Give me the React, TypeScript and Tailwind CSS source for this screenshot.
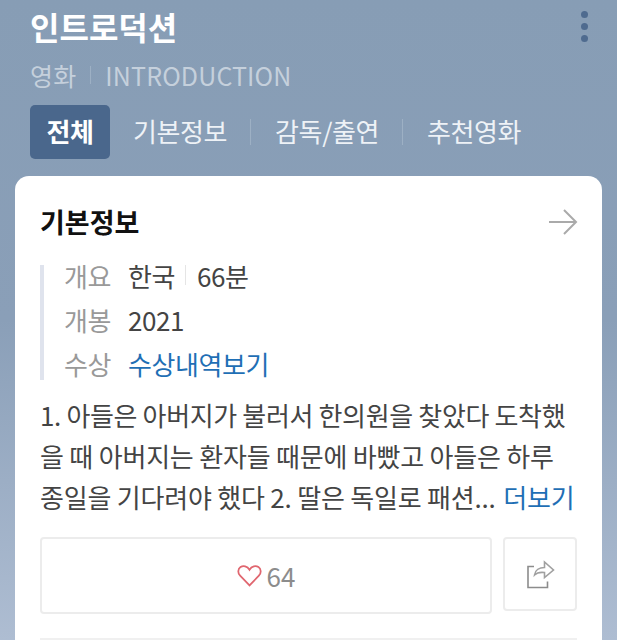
const font = "font-['Noto_Sans_CJK_KR','Noto_Sans',sans-serif]";

function InfoRow({ label, children }: { label: string; children: React.ReactNode }) {
  return (
    <div className="flex shrink-0 items-center h-[44px]">
      <span className="w-[64px] text-[#999999]">{label}</span>
      {children}
    </div>
  );
}

export default function App() {
  return (
    <div className={`${font} h-[640px] overflow-hidden bg-gradient-to-b from-[#879db5] via-[#8a9fb8] to-[#aebdd2]`}>
      <header className="relative pl-[30px] pt-[6px]">
        <h1 className="text-[32px] leading-[40px] font-bold text-white">인트로덕션</h1>
        <div className="flex items-center mt-[11px] text-[25px] leading-[36px] tracking-[0.15px] text-[#c5d0dc]">
          <span>영화</span>
          <span className="mx-[14px] w-px h-[18px] bg-[#9db0c4]" />
          <span>INTRODUCTION</span>
        </div>
        <div className="absolute right-[29px] top-[11px] flex flex-col gap-[5px]">
          <span className="size-[7px] rounded-full bg-[#4f6b8f]" />
          <span className="size-[7px] rounded-full bg-[#4f6b8f]" />
          <span className="size-[7px] rounded-full bg-[#4f6b8f]" />
        </div>
        <nav className="flex items-center mt-[12px] h-[54px] text-[26px] tracking-[-0.4px] text-[#eef2f6]">
          <span className="flex items-center justify-center w-[80px] h-[54px] pb-[3px] rounded-[5px] bg-[#4a678c] font-bold text-white">전체</span>
          <span className="ml-[23px] pb-[3px]">기본정보</span>
          <span className="ml-[23px] mr-[24px] w-px h-[26px] bg-[#9db0c4]" />
          <span className="pb-[3px]">감독/출연</span>
          <span className="ml-[23px] mr-[24px] w-px h-[26px] bg-[#9db0c4]" />
          <span className="pb-[3px]">추천영화</span>
        </nav>
      </header>
      <main className="mx-[15px] mt-[17px] px-[25px] pt-[23px] h-[500px] rounded-t-[14px] bg-white">
        <div className="flex items-center justify-between h-[46px]">
          <h2 className="text-[27px] font-bold text-[#111111]">기본정보</h2>
          <svg width="32" height="30" viewBox="0 0 32 30" fill="none" stroke="#aaaaaa" strokeWidth="2" className="mr-[-2px]">
            <path d="M2 15h27M17 3l12 12-12 12" />
          </svg>
        </div>
        <div className="mt-[20px] pl-[20px] pb-[7px] border-l-[4px] border-[#dfe3ed] text-[26px] tracking-[-0.4px] text-[#444444] h-[115px] flex flex-col justify-center">
          <InfoRow label="개요">
            <span>한국</span>
            <span className="ml-[10px] mr-[11px] w-px h-[20px] bg-[#e5e5e5]" />
            <span>66분</span>
          </InfoRow>
          <InfoRow label="개봉">
            <span>2021</span>
          </InfoRow>
          <InfoRow label="수상">
            <span className="text-[#1f6fb5]">수상내역보기</span>
          </InfoRow>
        </div>
        <p className="mt-[14px] text-[26px] leading-[41px] tracking-[-0.2px] text-[#444444] whitespace-nowrap">
          <span className="tracking-[-0.35px]">1. 아들은 아버지가 불러서 한의원을 찾았다 도착했</span>
          <br />
          을 때 아버지는 환자들 때문에 바빴고 아들은 하루
          <br />
          종일을 기다려야 했다 2. 딸은 독일로 패션... <span className="ml-[2px] text-[#1f6fb5]">더보기</span>
        </p>
        <div className="flex items-start gap-[11px] mt-[20px]">
          <button className="flex flex-1 items-center justify-center gap-[5px] h-[77px] rounded-[4px] border-2 border-[#ececec] text-[26px] text-[#8c8c8c]">
            <svg width="25" height="25" viewBox="0 0 24 24" fill="none" stroke="#e0666f" strokeWidth="1.7">
              <path d="M12 21.5 3 12.2C.4 9.4.9 5.6 3.4 3.9 6 2.2 9.800 2.800 12 6.500c2.200-3.700 6-4.300 8.600-2.600 2.500 1.700 3 5.500.4 8.300L12 21.500Z" />
            </svg>
            64
          </button>
          <button className="flex items-center justify-center w-[74px] h-[74px] rounded-[4px] border-2 border-[#ececec]">
            <svg width="30" height="30" viewBox="0 0 30 30" fill="none" stroke="#8c8c8c" strokeWidth="1.6">
              <path d="M9 7.500H3v21h19.500v-6" />
              <path d="M9.500 16c.5-5 5-7.500 10-7.500V3l9 8-9 7.500v-5c-4-.5-7.500 0-10 2.500Z" stroke="#a0a0a0" />
            </svg>
          </button>
        </div>
        <div className="mt-[24px] border-t-2 border-[#f0f0f0]" />
      </main>
    </div>
  );
}
